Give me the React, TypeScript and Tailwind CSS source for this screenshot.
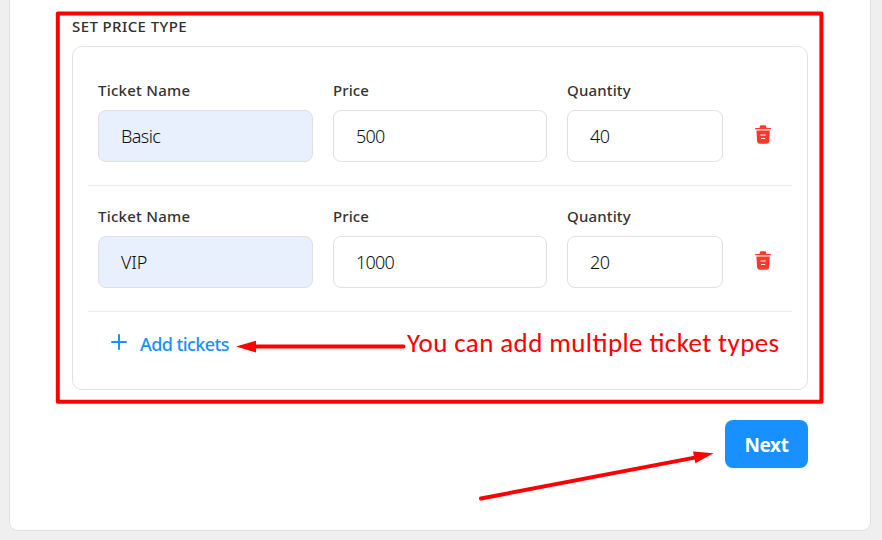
const inputBase =
  "flex h-[52px] items-center rounded-lg border border-[#e0e0e3] pl-[22px] text-[18px] leading-none font-light text-[#0b0e11]";

function Field({ label, value, width, filled = false, spacing, labelSpacing }: {
  label: string;
  value: string;
  width: string;
  filled?: boolean;
  spacing: string;
  labelSpacing: string;
}) {
  return (
    <label className={`block ${width}`}>
      <span className={`block h-[30px] whitespace-nowrap text-[15px] leading-[20px] font-medium text-[#333] ${labelSpacing}`}>{label}</span>
      <span className={`${inputBase} ${filled ? "bg-[#e8effd]" : "bg-white"}`}>
        <span className={spacing}>{value}</span>
      </span>
    </label>
  );
}

function TrashIcon() {
  return (
    <svg width="16" height="19" viewBox="0 0 16 19" fill="#ff382e">
      <path d="M4.7 3.1V1.6Q4.9 .3 6.2 .3H9.8Q11.1 .3 11.3 1.6V3.1H15.4Q16 3.1 16 3.7T15.4 4.3H.6Q0 4.3 0 3.7T.6 3.1Z" />
      <path
        fillRule="evenodd"
        d="M1.4 5.4H14.8L14.2 16.4Q14 18.8 11.6 18.8H4.7Q2.3 18.8 2.1 16.4ZM5.4 9.4V10.6H10.8V9.4ZM6 12.9V14.1H10.2V12.9Z"
      />
    </svg>
  );
}

function TicketRow({ name, price, quantity, nameSpacing }: { name: string; price: string; quantity: string; nameSpacing: string }) {
  return (
    <div className="flex h-[126px] items-start gap-5 border-b border-[#ececec] pt-[20px] pl-[10px]">
      <Field label="Ticket Name" value={name} width="w-[215px]" filled spacing={nameSpacing} labelSpacing="tracking-[0.25px]" />
      <Field label="Price" value={price} width="w-[214px]" spacing="tracking-[-0.75px]" labelSpacing="tracking-[0.1px]" />
      <Field label="Quantity" value={quantity} width="w-[156px]" spacing="tracking-[-0.6px]" labelSpacing="tracking-[0.15px]" />
      <button className="mt-[45px] ml-[12px]" aria-label="Delete ticket">
        <TrashIcon />
      </button>
    </div>
  );
}

export default function App() {
  return (
    <div className="relative h-[540px] w-[882px] overflow-hidden bg-[#efefef] font-['Noto_Sans','Open_Sans',sans-serif]">
      <main className="ml-[9px] h-[531px] w-[862px] rounded-b-[9px] border border-t-0 border-[#e0e1e8] bg-white pt-[16px] pl-[62px]">
        <h2 className="h-[30px] text-[15px] leading-[20px] font-medium tracking-[0.4px] text-[#303030]">SET PRICE TYPE</h2>
        <section className="h-[344px] w-[736px] rounded-[10px] border border-[#e1e2e6] px-[15px] pt-[13px]">
          <TicketRow name="Basic" price="500" quantity="40" nameSpacing="tracking-[-0.6px]" />
          <TicketRow name="VIP" price="1000" quantity="20" nameSpacing="tracking-[-0.2px]" />
          <button className="mt-[20px] ml-[23px] flex h-6 items-center text-[18px] leading-6 font-medium text-[#1890ff]">
            <svg width="16" height="16" viewBox="0 0 16 16" className="-mt-[4px] mr-[13px]" stroke="currentColor" strokeWidth="2" strokeLinecap="round">
              <path d="M8 1V15M1 8H15" />
            </svg>
            <span className="tracking-[-0.6px]">Add tickets</span>
          </button>
        </section>
        <button className="mt-[30px] ml-[653px] flex h-12 w-[83px] items-center justify-center rounded-lg bg-[#1890ff] pt-[2px] text-[19px] font-bold tracking-[-0.4px] text-white shadow-[0_2px_0_rgba(0,0,0,0.03)]">
          Next
        </button>
      </main>
      <svg className="absolute inset-0" width="882" height="540" fill="none" stroke="#f00" strokeWidth="4">
        <rect x="57.8" y="13.5" width="763.6" height="388.3" strokeLinejoin="round" />
        <path d="M254 346.5H403.5M481 498.5L696 457.4" strokeLinecap="round" />
        <path d="M236 346.5L256 340.7V352.5ZM713.5 453.3L693 451.5L695.4 463.2Z" fill="#f00" stroke="none" />
      </svg>
      <p className="absolute top-[327px] left-[407px] whitespace-nowrap font-['Carlito','Open_Sans',sans-serif] text-[27px] leading-[32px] font-light tracking-[0.4px] text-[#f00] [font-feature-settings:'liga'_1]">
        You can add multiple ticket types
      </p>
    </div>
  );
}
